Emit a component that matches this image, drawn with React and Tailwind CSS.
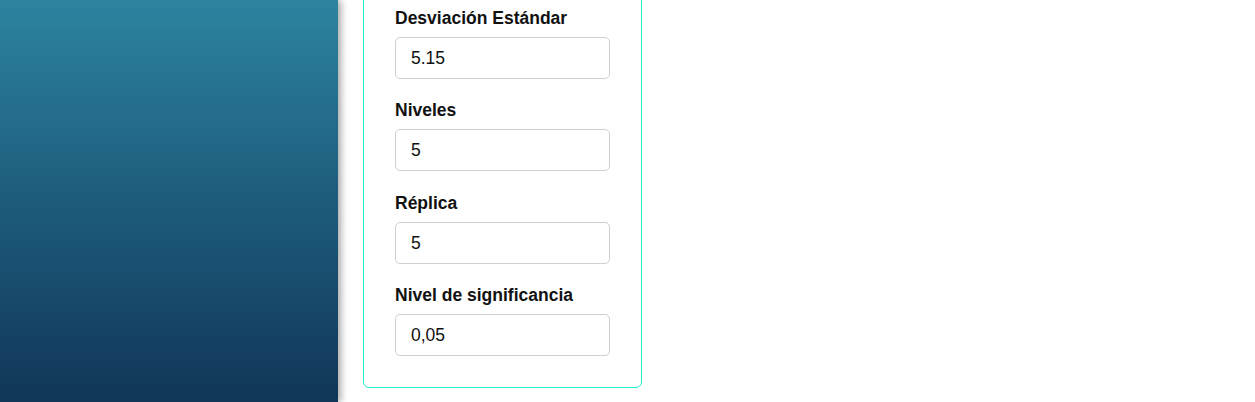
import React, { useState } from 'react';

const fields = [
    { key: 'desviacion', label: 'Desviación Estándar', value: '5.15', gap: 'mb-[21px]' },
    { key: 'niveles', label: 'Niveles', value: '5', gap: 'mb-[22px]' },
    { key: 'replica', label: 'Réplica', value: '5', gap: 'mb-[21px]' },
    { key: 'alpha', label: 'Nivel de significancia', value: '0,05', gap: '' },
];

const App = () => {
    const [form, setForm] = useState(
        Object.fromEntries(fields.map((f) => [f.key, f.value]))
    );

    return (
        <div className="flex h-[402px] overflow-hidden bg-white font-['Liberation_Sans',Arial,sans-serif]">
            {/* Sidebar */}
            <div className="relative z-10 w-[338px] shrink-0 bg-gradient-to-b from-[#2c849f] to-[#113659] shadow-[3px_0_7px_rgba(0,0,0,0.35)]" />

            {/* Contenido */}
            <div className="flex-1 pl-[25px]">
                <div className="-mt-[20px] w-[279px] rounded-[6px] border border-[#1feed6] bg-white px-[31px] pt-[27px] pb-[31px]">
                    {fields.map((f) => (
                        <div key={f.key} className={f.gap}>
                            <label className="mb-2 block text-[17.5px] leading-[21px] font-bold text-[#111]">
                                {f.label}
                            </label>
                            <input
                                type="text"
                                value={form[f.key]}
                                onChange={(e) => setForm({ ...form, [f.key]: e.target.value })}
                                className="block h-[42px] w-full rounded-[5px] border border-[#cfcfcf] bg-white px-[15px] text-[17.5px] text-[#111] outline-none"
                            />
                        </div>
                    ))}
                </div>
            </div>
        </div>
    );
};

export default App;
